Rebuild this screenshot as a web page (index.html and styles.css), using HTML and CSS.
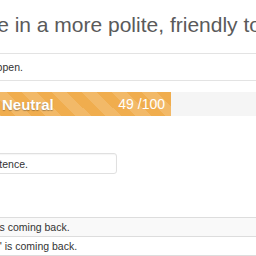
FILE: index.html
```html
<!DOCTYPE html>
<html lang="en">
<head>
    <meta charset="UTF-8">
    <title>Politeness</title>
    <link rel="stylesheet" href="styles.css">
</head>
<body>
    <div class="page">
        <h1 class="title">Rephrase your sentence in a more polite, friendly tone</h1>
        <div class="well">Type in a sentence and see what will happen.</div>
        <div class="progress">
            <div class="bar" style="width: 179px">
                <span class="label">Neutral</span>
                <span class="score">49 /100</span>
            </div>
        </div>
        <form class="ask">
            <input class="field" type="text" value="Type a sentence.">
        </form>
        <table class="results">
            <tr><td>Winter is coming back.</td></tr>
            <tr><td>"Winter" is coming back.</td></tr>
        </table>
    </div>
</body>
</html>
```

FILE: styles.css
```css
body {
    margin: 0;
    overflow: hidden;
    font-family: "Liberation Sans", Arial, sans-serif;
    color: #333;
    background-color: #fff;
}
.page {
    margin-left: -8px;
    width: 380px;
    padding-top: 13px;
}
.title {
    margin: 0 0 17px -212px;
    font-size: 21px;
    font-weight: normal;
    line-height: 23px;
    color: #5a5a5a;
    white-space: nowrap;
}
.well {
    border-top: 1px solid #e3e3e3;
    border-bottom: 1px solid #e3e3e3;
    padding: 6px 0;
    font-size: 10.5px;
    line-height: 14px;
    text-indent: -181px;
    white-space: nowrap;
    overflow: hidden;
}
.progress {
    margin-top: 11px;
    height: 24px;
    background-color: #f5f5f5;
}
.bar {
    display: flex;
    justify-content: space-between;
    align-items: center;
    height: 100%;
    padding: 0 6px 0 10px;
    box-sizing: border-box;
    background-color: #f0ad4e;
    background-image: linear-gradient(45deg, rgba(255,255,255,.15) 25%, transparent 25%, transparent 50%, rgba(255,255,255,.15) 50%, rgba(255,255,255,.15) 75%, transparent 75%, transparent);
    background-size: 30px 30px;
    color: #fff;
}
.label {
    font-size: 15px;
    font-weight: bold;
    text-shadow: 0 1px 1px rgba(0,0,0,.3);
}
.score {
    font-size: 14px;
}
.ask {
    margin: 37px 0 0 -54px;
}
.field {
    display: block;
    width: 179px;
    height: 21px;
    box-sizing: border-box;
    margin: 0;
    padding: 0 9px;
    border: 1px solid #e0e0e0;
    border-radius: 3px;
    box-shadow: inset 0 1px 1px rgba(0,0,0,.04);
    font-family: "Liberation Sans", Arial, sans-serif;
    font-size: 10.5px;
    color: #333;
}
.results {
    margin: 43px 0 0 -34px;
    width: 420px;
    border-collapse: collapse;
    border-bottom: 1px solid #ddd;
    font-size: 10.5px;
}
.results td {
    height: 18px;
    padding: 0 6px;
    border-top: 1px solid #ddd;
    white-space: nowrap;
}
.results tr:nth-child(odd) td {
    background-color: #f9f9f9;
}
```
